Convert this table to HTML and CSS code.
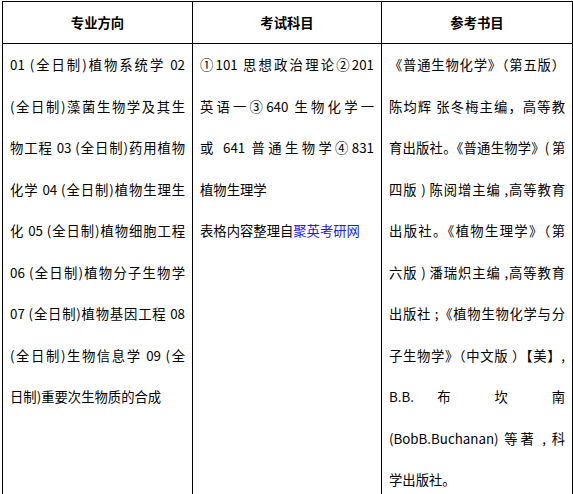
FILE: index.html
```html
<!DOCTYPE html>
<html lang="zh-CN">
<head>
<meta charset="utf-8">
<title>专业目录</title>
<link rel="stylesheet" href="styles.css">
</head>
<body>
<table class="grid">
  <colgroup>
    <col class="c1">
    <col class="c2">
    <col class="c3">
  </colgroup>
  <thead>
    <tr>
      <th>专业方向</th>
      <th>考试科目</th>
      <th>参考书目</th>
    </tr>
  </thead>
  <tbody>
    <tr>
      <td>
        <span class="ln">01 (全日制)植物系统学 02</span>
        <span class="ln">(全日制)藻菌生物学及其生</span>
        <span class="ln">物工程 03 (全日制)药用植物</span>
        <span class="ln">化学 04 (全日制)植物生理生</span>
        <span class="ln">化 05 (全日制)植物细胞工程</span>
        <span class="ln">06 (全日制)植物分子生物学</span>
        <span class="ln">07 (全日制)植物基因工程 08</span>
        <span class="ln">(全日制)生物信息学 09 (全</span>
        <span class="ln end">日制)重要次生物质的合成</span>
      </td>
      <td>
        <span class="ln">①101 思想政治理论②201</span>
        <span class="ln">英语一③640 生物化学一</span>
        <span class="ln">或 641 普通生物学④831</span>
        <span class="ln end">植物生理学</span>
        <span class="ln end">表格内容整理自<span class="link">聚英考研网</span></span>
      </td>
      <td>
        <span class="ln">《普通生物化学》（第五版）</span>
        <span class="ln">陈均辉 张冬梅主编，高等教</span>
        <span class="ln tight">育出版社。《普通生物学》( 第</span>
        <span class="ln">四版 ) 陈阅增主编 ,高等教育</span>
        <span class="ln">出版社。《植物生理学》（第</span>
        <span class="ln">六版 ) 潘瑞炽主编 ,高等教育</span>
        <span class="ln">出版社 ;《植物生物化学与分</span>
        <span class="ln">子生物学》（中文版 ）【美】,</span>
        <span class="ln">B.B. 布 坎 南</span>
        <span class="ln">(BobB.Buchanan) 等著 , 科</span>
        <span class="ln end">学出版社。</span>
      </td>
    </tr>
  </tbody>
</table>
</body>
</html>
```

FILE: styles.css
```css
html, body {
  margin: 0;
  padding: 0;
  background: #fff;
}
body {
  padding: 1px 0 0 2px;
  font-family: "Noto Sans CJK SC", "Noto Sans", sans-serif;
  color: #000;
}
.grid {
  border-collapse: collapse;
  table-layout: fixed;
  width: 570px;
}
.c1 { width: 190px; }
.c2 { width: 189px; }
.c3 { width: 191px; }
.grid th,
.grid td {
  border: 1px solid #000;
  padding: 0 7px;
  vertical-align: top;
}
.grid th {
  height: 41px;
  font-size: 13.33px;
  font-weight: bold;
  text-align: center;
  vertical-align: middle;
}
.grid td {
  font-size: 13.33px;
  line-height: 41.5px;
  height: 600px;
}
.ln {
  display: block;
  white-space: nowrap;
  text-align: justify;
  text-align-last: justify;
}
.ln.tight {
  letter-spacing: -0.4px;
}
.ln.end {
  text-align: left;
  text-align-last: left;
}
.link {
  color: #1a1aff;
}
```
